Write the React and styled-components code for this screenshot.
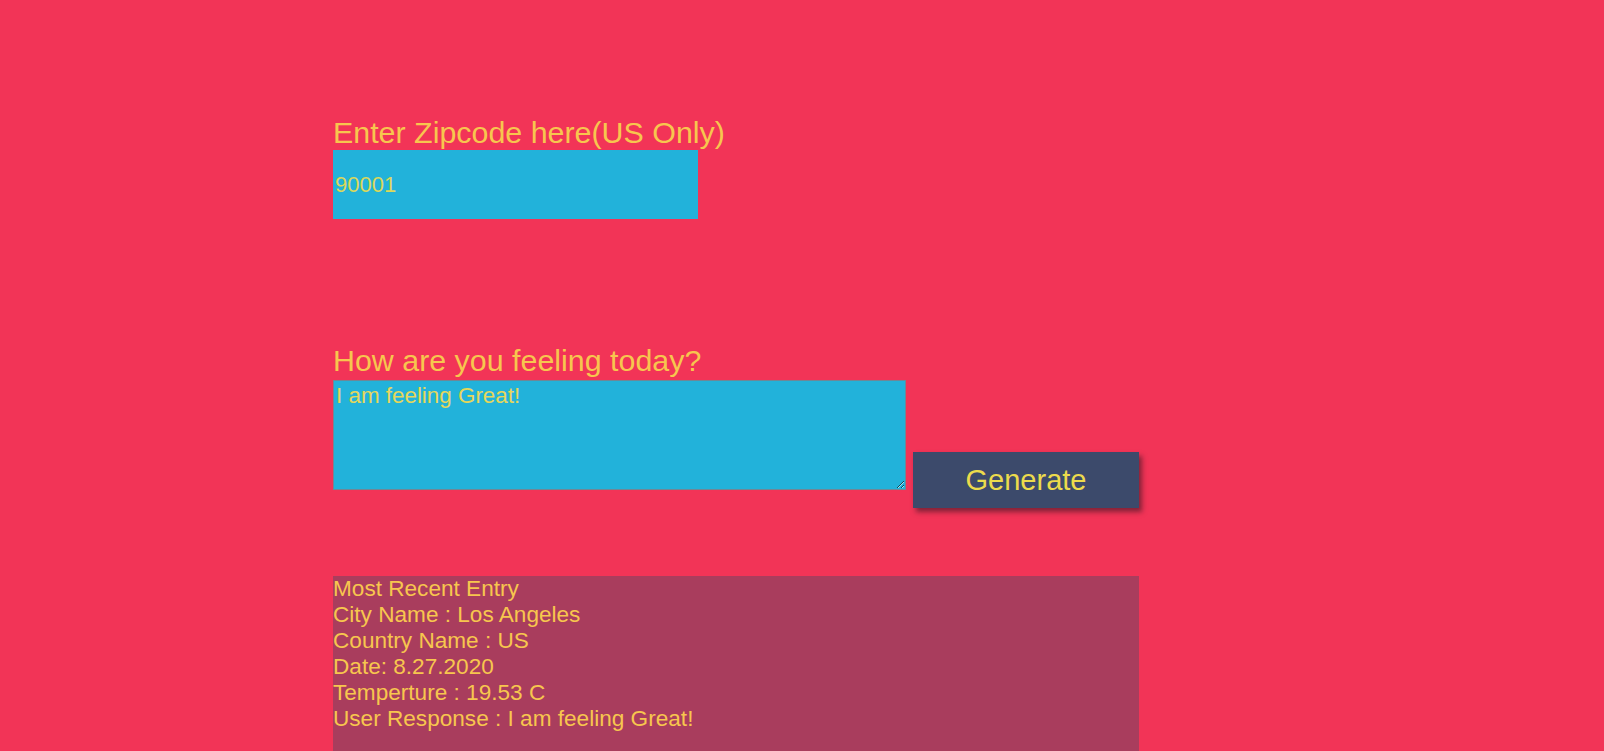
import React from 'react'
import styled, { createGlobalStyle } from 'styled-components'

const GlobalStyle = createGlobalStyle`
  html, body {
    margin: 0;
    padding: 0;
    overflow: hidden;
  }
  body {
    background: #f23457;
    font-family: "Liberation Sans", Arial, sans-serif;
  }
`

const Page = styled.div`
  min-height: 751px;
  padding: 115px 0 0 333px;
  box-sizing: border-box;
`

const Column = styled.main`
  width: 806px;
  display: flex;
  flex-direction: column;
`

const Field = styled.div`
  display: flex;
  flex-direction: column;
  margin-top: ${props => props.offset || 0}px;
`

const Label = styled.label`
  display: block;
  font-size: 30.4px;
  color: #f7c64e;
`

const ZipInput = styled.input`
  box-sizing: border-box;
  width: 365px;
  height: 69px;
  border: none;
  padding: 1px 2px;
  outline: none;
  background: #22b2da;
  color: #dcd85a;
  font-family: "Liberation Sans", Arial, sans-serif;
  font-size: 22px;
`

const FeelingRow = styled.div`
  display: flex;
  align-items: flex-start;
  gap: 7px;
  margin-top: 2px;
`

const FeelingArea = styled.textarea`
  box-sizing: border-box;
  width: 573px;
  height: 110px;
  margin: 0;
  padding: 2px;
  border: 1px solid #6f8796;
  outline: none;
  background: #22b2da;
  color: #e6d75a;
  font-family: "Liberation Sans", Arial, sans-serif;
  font-size: 22.4px;
`

const GenerateButton = styled.button`
  box-sizing: border-box;
  width: 226px;
  height: 56px;
  margin-top: 72px;
  border: none;
  background: #3c4a6b;
  color: #ecdb4c;
  font-family: "Liberation Sans", Arial, sans-serif;
  font-size: 29px;
  box-shadow: 3px 4px 5px rgba(40, 20, 30, 0.55);
  cursor: pointer;
`

const EntryHolder = styled.section`
  margin-top: 68px;
  height: 200px;
  background: #a93d5d;
  color: #f7c64e;
  font-size: 22.6px;
`

const EntryLine = styled.div`
  line-height: normal;
`

const entry = [
  'Most Recent Entry',
  'City Name : Los Angeles',
  'Country Name : US',
  'Date: 8.27.2020',
  'Temperture : 19.53 C',
  'User Response : I am feeling Great!',
]

const App = () => (
  <Page>
    <GlobalStyle />
    <Column>
      <Field>
        <Label htmlFor="zip">Enter Zipcode here(US Only)</Label>
        <ZipInput id="zip" type="text" defaultValue="90001" />
      </Field>
      <Field offset={124}>
        <Label htmlFor="feelings">How are you feeling today?</Label>
        <FeelingRow>
          <FeelingArea id="feelings" defaultValue="I am feeling Great!" />
          <GenerateButton>Generate</GenerateButton>
        </FeelingRow>
      </Field>
      <EntryHolder>
        {entry.map(line => (
          <EntryLine key={line}>{line}</EntryLine>
        ))}
      </EntryHolder>
    </Column>
  </Page>
)

export default App
